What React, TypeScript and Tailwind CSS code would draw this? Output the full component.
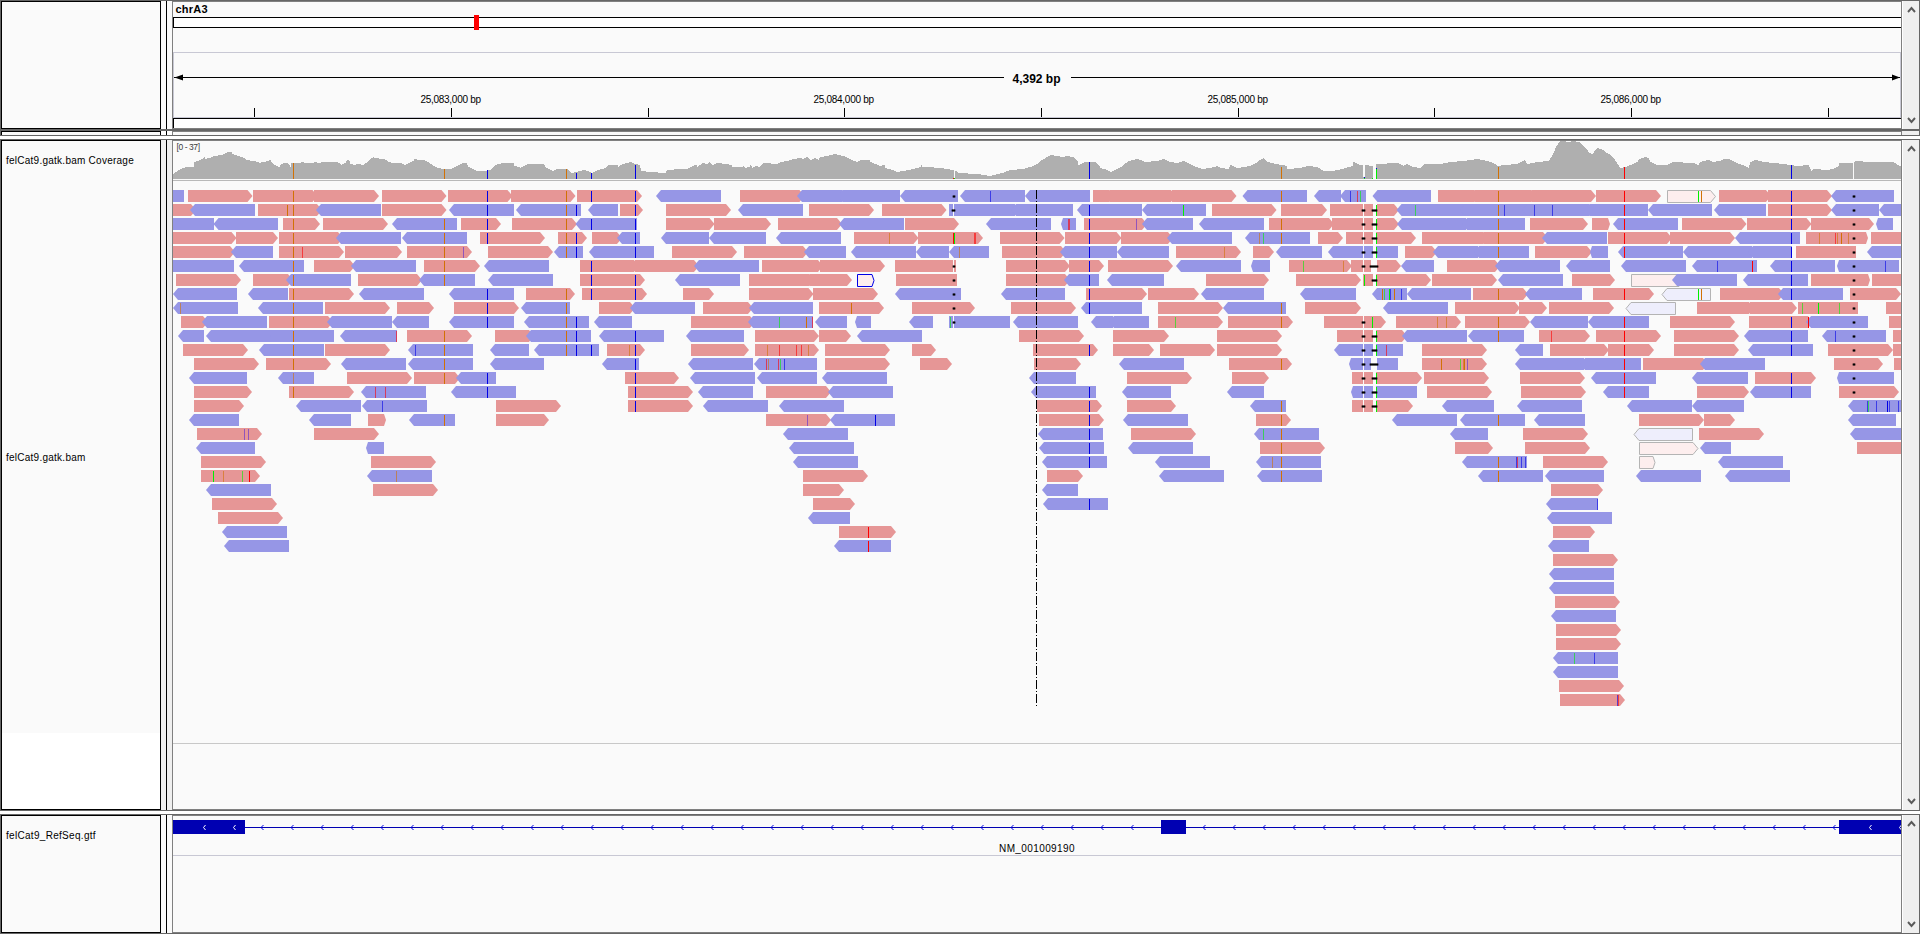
import React from "react";

// Each row lists reads as <kind><start>-<end>.
// F / R: forward / reverse read with an arrow head; f / r: flat segment;
// G / H: low mapping quality forward / reverse; B: blue outlined forward.
// A trailing "s" gives a short arrow head.
const READS: string[] = [
  "r173-184 F188-252.5 F253-317.5 F314-379 F382-446.5 F448-512.5 F511-575.5 F577-642 R656-721 F740-804.5 R797-842 R837.5-900 R900-958 R960-1025 R1025-1090 F1093-1114.5 F1110-1176 F1172-1236.5 R1242.5-1307 R1314-1341 R1340-1366 R1372.5-1431 F1438-1479.5 F1475-1536.5 F1532-1596 F1596-1661 G1667-1715.5 F1719-1771 F1768-1832 R1831-1894",
  "F173-196 R190-255 F258-322 R316-381 F382-446.5 R449-514 R516-581 R588-618 F620-643 F666-731 R738-803 F809-874 F882-946.5 r949-953 r954-1015 R1011-1073 R1077-1142 R1142-1206 F1212-1276.5 F1281-1327 f1330-1363 f1364-1373 F1377-1399 R1396.5-1466 R1460-1528 R1522-1589 R1584.5-1648 R1648-1712 R1714-1766 F1768-1832 R1831-1879 R1879-1910",
  "r173-214 R213.5-278 F283-320 F323-388 R392-457 F461-501 F512-577 R575.5-637 F666-714.5 F714-771 F778-842 R839-904 F905-959 R986-1051 R1061-1076 F1084-1147 R1142-1193 R1199-1264 F1269-1334 f1332-1363 f1364-1373 F1377-1399 R1397-1466 R1462-1525 F1530-1588 F1592-1610 R1613-1678 F1682-1746.5 F1747-1811.5 F1811-1874 R1876-1893",
  "F173-236.5 F236-278 F279-343 R336-401 R402-467 F480-545 F558-587 F592-622 R617-640 R661-709 R709-766 R776-841 F854-918.5 F918-983 F1000-1064.5 F1065-1121.5 F1121-1173 R1167-1232 R1245-1310 F1318-1343 f1346-1363 f1364-1373 F1376-1416 F1422-1488.5 F1484-1548 R1542-1607 F1608-1672 F1670-1735 R1735-1800 F1806-1868s f1871-1901",
  "F173-235 R231-273 F279-344 F345-402 F407-472 F488-553 R554-583 R589-654 F672-737 F744-808 R804-846 R851-916 R916-949 R949-989 F1002-1066 R1060-1117 R1117-1169 F1176-1241 F1253-1274 R1276-1322 R1328-1363 r1364-1373 r1376-1398 F1405-1437 R1433-1478 R1474-1529 F1535-1592 R1590-1608 R1618-1683 R1683-1752 R1748-1792 f1796-1856 R1867-1910",
  "r173-234 R239-304 F314-355 R351-416 F424-480 R484-549 F580-639 F635-699 R694-759 F762-823 F820-885 f895-953 f954-956 F1006-1070 F1069-1104 F1108-1173 R1176-1241 R1251-1270 F1289-1352 f1351-1363 f1364-1371 F1377-1401 R1401-1434 F1447-1500 R1495-1560 R1566-1610 R1621-1686 R1692-1757 R1770-1835 R1837-1899s",
  "F176-241 F253-293 R286-351 F358-422 R419-475 R488-553 F580-645 R675-740 F749-814.5 F810-852 B857-874 f896-957 F1006-1070 R1064-1099 R1107-1164 F1206-1269 F1296-1361 f1363-1373 F1376-1431 F1432-1497 R1498-1563 F1572-1615 G1631-1684 R1672-1737 R1743-1808 F1811-1870s f1872-1901",
  "R173-237 R248-288 F289-354 R359-424 R449-514 F526-575 F582-647 F683-714 F749-813.5 F813-878 R895-961 R1001-1065 F1086-1147 F1148-1199 R1201-1264 R1300-1356 R1372-1407 R1407-1471 F1473-1528 R1525-1582 F1593-1654 H1662-1711 F1720-1784 R1778-1843 F1850-1901",
  "R173-238 R258-323 F325-390 F397-434 F454-519 R521-570 F599-635 R630-695 F703-753 R749-813 F819-884 F912-975 F1011-1076 R1081-1142 F1158-1223 R1223-1286 F1305-1361 R1383-1448 F1455-1520 F1519-1547 F1549-1614 H1626-1676 F1697-1754 F1750-1797 f1798-1858 f1886-1901",
  "F181-208 R202-267 F269-333 R327-392 R392-429 R449-514 R524-589 R594-632 F691-755 R748-813 R815-847 R855-871 R909-933 r949-953 r954-1010 R1013-1078 R1091-1113 R1109-1149 F1158-1223 F1228-1293 f1324-1363 F1364-1386 F1396-1461 F1465-1530 R1530-1588 R1588-1649 F1670-1735 F1749-1813 R1806-1868 f1889-1901",
  "R178-204 R206-275 R270-334 R340-397 F407-472 F495-534 R526-591 R599-664 R686-744 F755-819 F819-851 R857-922 F1019-1084 F1113-1169 F1217-1282 f1337-1363 f1364-1373 F1376-1407 R1402-1467 R1468-1524 F1539-1590 F1596-1661 F1674-1739 R1744-1808 R1822-1886 f1893-1901",
  "F183-248 R259-324 F325-390 R408-473 R490-529 R534-599 F607-645 F691-749 F755-819 F825-890 F912-936 F1033-1098 F1113-1154 F1160-1215 F1217-1282 R1334-1363 r1364-1373 r1376-1403 F1422-1487 R1515-1543 F1550-1609 F1608-1654 F1674-1739 R1748-1813 F1828-1893 f1893-1901",
  "F194-259 F266-331 R341-406 R408-473 R490-544 R602-639 R688-753 R754-817 F825-890 F920-952 F1034-1081 R1119-1184 F1229-1292 R1349-1363s r1364-1371 r1377-1398 F1422-1487 R1515-1584 R1580-1641 F1643-1708 R1700-1765 F1834-1883 f1894-1901",
  "R189-247 R278-314 F347-412 F414-460 R456-496 F625-679 R690-755 R757-817 R822-887 R1029-1076 F1127-1192 F1232-1269 f1352-1363 f1364-1373 F1376-1422 F1424-1489 F1520-1585 R1591-1656 R1692-1748 F1755-1816 R1837-1894s",
  "F194-252 F289-354 R361-426 R451-516 F628-693 R698-753 F766-831 R828-893 R1031-1096 R1122-1171 R1227-1264 R1351-1363s r1364-1373 r1376-1417 F1427-1492 F1521-1586 R1603-1649 F1697-1749 R1750-1811 F1839-1899",
  "F194-244 R296-361 R362-427 F496-561 F628-693 R703-768 R779-844 F1037-1102 F1127-1176 R1250-1286 f1352-1363 f1364-1373 F1376-1413 R1442-1494 R1517-1582 R1627-1692 R1692-1744 R1848-1910",
  "R189-239 R309-351 F368-386 R409-455 F496-549 F766-831 R830-895 F1039-1104 R1123-1188 F1256-1291 R1392-1457 R1460-1525 R1534-1585 F1639-1704 F1704-1735 R1848-1896",
  "F197-262 F314-379 R783-848 R1038-1103 F1131-1196 R1254-1319 R1450-1488 F1523-1588 H1634-1693 F1699-1764 R1850-1910",
  "R196-255 R366-384 R789-854 R1039-1104 R1128-1193 F1260-1325 F1455-1493 F1525-1590 G1639-1698 R1700-1731 f1857-1901",
  "F201-266 F371-436 R793-858 R1042-1107 R1155-1210 R1256-1321 R1462-1527 F1543-1608 G1639-1655 R1718-1783",
  "F201-260 R367-432 F803-868 F1047-1083 R1159-1224 R1257-1322 R1478-1543 R1545-1604 R1636-1701 R1725-1790",
  "R206-271 F373-438 F803-844 R1042-1078 F1551-1603",
  "F212-277 F813-855 R1043-1108 R1546-1598",
  "F218-283 R808-850 R1547-1612",
  "R222-287 F839-896 F1553-1595",
  "R224-289 R834-891 R1548-1589",
  "F1553-1618",
  "R1549-1614",
  "R1549-1614",
  "F1555-1620",
  "R1551-1616",
  "F1556-1621",
  "F1556-1621",
  "R1553-1618",
  "R1553-1618",
  "F1559-1624",
  "F1560-1625",
];

// Variants shared by many reads: colour + position, then the rows that carry them.
const COLUMNS: [string, number[]][] = [
  ["O293", [0, 1, 2, 3, 4, 5, 6, 7, 8, 9, 10, 11, 12, 14]],
  ["O444", [2, 3, 4, 5, 6, 10, 11, 12, 13, 16]],
  ["B487", [0, 1, 2, 3, 7, 8, 9, 13, 14]],
  ["O566", [0, 1, 2, 3, 4, 7, 8, 9, 10, 11]],
  ["B576", [1, 3, 4, 9, 10, 11]],
  ["B591", [0, 2, 5, 6, 7, 11]],
  ["B635", [0, 1, 2, 3, 4, 6, 7, 10, 11, 12, 13, 14, 15]],
  ["B1089", [1, 2, 3, 4, 5, 6, 7, 8, 11, 14, 15, 16, 17, 18, 19, 22]],
  ["O1281", [0, 2, 3, 8, 9, 12, 15, 16, 17, 18, 19, 20]],
  ["G1376", [1, 2, 3, 4, 6, 10, 11, 13, 14, 15]],
  ["O1498", [0, 1, 2, 3, 4, 7, 9, 10, 16, 19, 20]],
  ["R1624", [0, 1, 2, 3, 4, 7, 9, 10, 11, 12, 13, 14]],
  ["B1791", [0, 1, 2, 3, 4, 5, 6, 7, 9, 10, 11, 13, 14]],
];

// Isolated mismatches per row; lower case means low base quality.
const MARKS: Record<number, string> = {
  0: "b990 b1350 r1357 g1360 G1698 O1701",
  1: "O287 G1183 g1415 b1504 b1534 b1552",
  2: "r1068 r1069 p1136",
  3: "o889 R953 G954 r974 r975 o1259 g1263 o1819 r1835 o1837 O1841 o1848",
  4: "r302 p463 o959 o1224",
  5: "g1303 o1343 b1717 R1752 b1885",
  6: "G1364",
  7: "O1382 g1384 G1389 b1390 O1394 b1401 G1698 O1701",
  8: "o180 O851 g1802 G1818 g1839",
  9: "g779 O806 r812 g950 g1175 G1372 o1437 o1446 R1808",
  10: "r396 r1551 b1835",
  11: "b415 o629 o767 r779 r796 r801 o808 r1386",
  12: "r766 o768 r778 g780 b784 O1441 g1460 o1463 O1464 p1467",
  13: "o293",
  14: "r375 r385",
  15: "b382 b1867 g1868 b1876 B1887 b1889 b1898",
  16: "p807 B875",
  17: "p244 p248 g1263",
  19: "o1272 b1516 r1517 b1521 b1525",
  20: "G213 o223 g242 R249 o396",
  22: "b1597",
  24: "R868",
  25: "R868",
  33: "g1574 b1594",
  36: "b1617 r1618",
};

// Deletions: start, end, rows.
const DELETIONS: [number, number, number[]][] = [
  [952, 956, [0, 5, 6, 7, 8, 9]],
  [951, 956, [1]],
  [1361, 1366, [1, 2, 3, 4, 5, 9, 10, 11, 12, 13, 14, 15]],
  [1371, 1378, [1, 2, 3, 4, 6, 10, 11, 13, 14, 15]],
  [1369, 1379, [5, 12]],
  [1852, 1856, [0, 1, 2, 3, 4, 5, 6, 7, 8, 9, 10, 11, 12, 13, 14]],
];

const COVERAGE =
  "173:5 177:8 179:9 182:11 187:12 193:12 194:17 198:18 202:20 204:22 205:20 212:22 214:23 222:24 223:25 228:27 231:27 232:25 235:24 238:23 241:22 245:20 246:19 253:18 257:17 259:16 263:17 268:18 270:19 271:17 274:14 279:12 280:14 283:16 287:16 289:14 290:12 291:16 303:16.6 305:16 313:16 315:17 317:16 324:17 337:17 341:14 345:16 347:19 349:18 350:15 354:14 358:15 363:14 367:17 370:20 373:22 374:21 383:20 386:19 388:17 392:16 400:16 405:14 409:16 413:18 414:20 418:19 423:19 428:17 433:13 438:11 442:10 450:10 455:12 459:14 463:16 466:16 468:12 473:10 476:8 483:8 490:9 493:12 497:15 505:16 513:16 514:13 518:12 520:11 524:13 527:15 543:15 545:12 548:10 552:8 557:10 567:10 571:6 580:8 583:9 588:8 591:6 594:7 598:9 605:11 608:14 617:14 618:12 622:15 627:16 630:17 635:15 639:14 641:8 650:7 665:6 667:9 680:10 687:10 692:13 696:14 697:12 702:16 707:15 709:17 712:14 717:16 725:15 731:14 732:12 742:12 743:13 745:11 749:12 750:14 752:11 755:13 759:12 763:16 777:15 780:17 787:18 793:20 800:21 803:20 807:22 810:19 815:21 818:19 820:22 827:23 835:25 838:24 843:23 848:21 853:18 857:17 860:19 869:19 870:17 875:15 880:13 884:14 885:11 892:9 896:7 903:8 913:10 920:12 921:14 922:12 927:12 940:11 952:9 956:8 958:6 977:5 990:3 1002:6 1010:9 1023:10 1033:13 1037:15 1040:18 1045:21 1050:24 1063:22 1066:23 1073:22 1077:18 1078:14 1085:17 1095:17 1098:14 1100:11 1107:9 1110:7 1115:9 1122:13 1128:18 1137:20 1145:17 1157:18 1163:20 1170:17 1177:16 1183:18 1188:16 1193:13 1202:10 1210:11 1217:13 1220:11 1228:10 1230:14 1237:11 1250:13 1256:16 1258:18 1263:21 1267:17 1275:15 1282:14 1286:13 1287:10 1300:11 1307:13 1317:12 1323:8 1332:8 1342:10 1352:13 1353:17 1360:14 1365:14 1372:13 1377:15 1397:16 1403:13 1407:15 1412:12 1420:11 1424:15 1440:15 1450:17 1463:18 1477:20 1487:18 1493:16 1497:13 1505:14 1517:15 1524:19 1527:15 1537:17 1548:18 1551:22 1553:26 1556:33 1559:37 1561:38 1570:37 1572:38 1579:37 1582:34 1586:30 1589:26 1592:25 1595:29 1597:31 1603:29 1605:27 1610:24 1613:21 1617:15 1620:11 1625:12 1630:14 1637:17 1639:20 1645:22 1648:21 1650:17 1657:14 1667:14 1672:17 1693:16 1698:14 1700:17 1708:19 1712:17 1720:18 1723:20 1728:20 1733:18 1738:15 1743:14 1748:11 1750:17 1755:19 1763:17 1773:16 1783:15 1790:14 1797:13 1808:14 1811:8 1813:10 1827:9 1833:10 1838:13 1839:16 1852:16 1855:18 1870:17 1880:17 1893:17 1897:14 1901:12";

const COVERAGE_BARS: [number, number, string][] = [
  [293, 16, "O"], [444, 10, "O"], [487, 9, "B"], [566, 10, "O"], [576, 6, "B"],
  [591, 6, "B"], [635, 14, "B"], [953, 1, "R"], [954, 1, "G"], [1089, 17, "B"],
  [1281, 12, "O"], [1364, 2, "B"], [1364, 1, "G"], [1372, 1, "G"], [1376, 11, "B"],
  [1376, 10, "G"], [1498, 12, "O"], [1624, 12, "R"], [1791, 14, "B"],
];

const BASE: Record<string, string> = {
  O: "#d17105",
  B: "#0000e6",
  R: "#ff0000",
  G: "#00f000",
  P: "#5a28d2",
};

const rowY = (row: number) => 190 + row * 14;

function coveragePath() {
  const pts = COVERAGE.split(" ").map((p) => p.split(":").map(Number));
  let d = "M173 179";
  let i = 0;
  for (let x = 173; x < 1901; x++) {
    while (i < pts.length - 2 && pts[i + 1][0] <= x) i++;
    const [x0, h0] = pts[i];
    const [x1, h1] = pts[i + 1];
    const h = Math.round(h0 + ((h1 - h0) * (x - x0)) / (x1 - x0));
    d += `V${179 - h}H${x + 1}`;
  }
  return d + "V179Z";
}

function Read({ spec, y }: { spec: string; y: number }) {
  const kind = spec[0];
  const short = spec.endsWith("s");
  const [a, b] = spec.slice(1).replace("s", "").split("-").map(Number);
  const forward = "FfGB".includes(kind);
  const outlined = "GHB".includes(kind);
  const flat = kind === "f" || kind === "r";
  const head = flat ? 0 : short || b - a <= 20 ? 2 : 5;
  const o = outlined ? 0.5 : 0;
  const t = y + o;
  const m = y + 6 + o;
  const e = y + 12 + o;
  const points = forward
    ? `${a + o},${t} ${b - head},${t} ${b},${m} ${b - head},${e} ${a + o},${e}`
    : `${b - o},${t} ${a + head},${t} ${a},${m} ${a + head},${e} ${b - o},${e}`;
  if (outlined) {
    return (
      <polygon
        points={points}
        fill={forward ? "#fdeeee" : "#eeeefc"}
        stroke={kind === "B" ? "#0000e6" : "#b4b4b4"}
      />
    );
  }
  return <polygon points={points} fill={forward ? "#e69696" : "#9696e6"} />;
}

function Mark({ spec, y }: { spec: string; y: number }) {
  const code = spec[0];
  const weak = code === code.toLowerCase();
  return (
    <rect
      x={Number(spec.slice(1))}
      y={y + 1}
      width={1}
      height={11}
      fill={BASE[code.toUpperCase()]}
      opacity={weak ? 0.6 : 1}
    />
  );
}

function AlignmentTrack() {
  return (
    <svg className="block" width="1728" height="669" viewBox="173 141 1728 669">
      <path d={coveragePath()} fill="#afafaf" shapeRendering="crispEdges" />
      <rect x="954" y="168" width="1" height="10" fill="#fafafa" />
      <rect x="1363" y="160" width="2" height="17" fill="#fafafa" />
      <rect x="1373" y="160" width="3" height="19" fill="#fafafa" />
      <rect x="1853" y="160" width="1" height="19" fill="#fafafa" />
      {COVERAGE_BARS.map(([x, h, c], i) => (
        <rect key={i} x={x} y={179 - h} width="1" height={h} fill={BASE[c]} />
      ))}
      <rect x="173" y="180" width="1728" height="1" fill="#b9b9b9" />
      <text x="176.5" y="150" fontSize="8.5" fill="#3c3c3c" textLength="23.5">
        [0 - 37]
      </text>
      {READS.map((line, row) => (
        <g key={row}>
          {line.split(" ").map((s, i) => (
            <Read key={i} spec={s} y={rowY(row)} />
          ))}
          {(MARKS[row] ?? "")
            .split(" ")
            .filter(Boolean)
            .map((s, i) => (
              <Mark key={i} spec={s} y={rowY(row)} />
            ))}
        </g>
      ))}
      {COLUMNS.map(([spec, rows]) =>
        rows.map((row) => <Mark key={spec + row} spec={spec} y={rowY(row)} />),
      )}
      {DELETIONS.map(([a, b, rows]) =>
        rows.map((row) => (
          <g key={`${a}-${row}`}>
            <rect x={a} y={rowY(row) + 5.5} width={b - a} height="2" fill="#000" opacity="0.35" />
            <rect x={a + 1} y={rowY(row) + 5.5} width={b - a - 2} height="2" fill="#000" />
          </g>
        )),
      )}
      <path d="M1036.5 190V708" stroke="#000" strokeDasharray="9 2 1 2" />
      <rect x="173" y="743" width="1728" height="1" fill="#c8c8c8" />
    </svg>
  );
}

const TICKS = [254, 451, 648, 844, 1041, 1238, 1434, 1631, 1828];
const TICK_LABELS: [number, string][] = [
  [451, "25,083,000 bp"],
  [844, "25,084,000 bp"],
  [1238, "25,085,000 bp"],
  [1631, "25,086,000 bp"],
];

function RulerTrack() {
  return (
    <svg className="block" width="1728" height="126" viewBox="173 2 1728 126">
      <text x="175.5" y="13" fontSize="11" fontWeight="700" textLength="32">
        chrA3
      </text>
      <rect x="173.5" y="17.5" width="1729" height="10" fill="#fff" stroke="#000" />
      <rect x="474" y="15" width="5" height="15" fill="#f00" />
      <rect x="173.5" y="52.5" width="1727" height="65" fill="none" stroke="#c8c8d4" />
      <path d="M174 77.5H1004M1071 77.5H1900" stroke="#000" />
      <path d="M174.5 77.5L183 74.5V80.5ZM1900 77.5L1892 74.5V80.5Z" />
      <text x="1012.5" y="83" fontSize="12" fontWeight="700" textLength="48">
        4,392 bp
      </text>
      {TICKS.map((x) => (
        <rect key={x} x={x} y="108" width="1" height="9" />
      ))}
      {TICK_LABELS.map(([x, label]) => (
        <text key={x} x={x - 30.5} y="103" fontSize="10" textLength="60.5">
          {label}
        </text>
      ))}
      <rect x="173" y="118" width="1728" height="10" />
      <rect x="174" y="119" width="1727" height="9" fill="#fff" />
    </svg>
  );
}

function GeneTrack() {
  const chevrons: number[] = [];
  for (let x = 261; x < 1150; x += 30) chevrons.push(x);
  for (let x = 1203; x < 1838; x += 30) chevrons.push(x);
  return (
    <svg className="block" width="1728" height="117" viewBox="173 816 1728 117">
      <rect x="173" y="827" width="1728" height="1" fill="#0000b2" />
      {chevrons.map((x) => (
        <path key={x} d={`M${x + 2.5} 825L${x} 827.5L${x + 2.5} 830`} fill="none" stroke="#0000e6" />
      ))}
      <rect x="173" y="820" width="72" height="14" fill="#0000b2" />
      <rect x="1161" y="820" width="25" height="14" fill="#0000b2" />
      <rect x="1839" y="820" width="62" height="14" fill="#0000b2" />
      {[203, 233, 1869, 1899].map((x) => (
        <path key={x} d={`M${x + 2.5} 825L${x + 0.5} 827.5L${x + 2.5} 830`} fill="none" stroke="#fff" />
      ))}
      <text x="999" y="852" fontSize="10" textLength="75.5">
        NM_001009190
      </text>
      <rect x="173" y="855" width="1728" height="1" fill="#c8c8d4" />
    </svg>
  );
}

function ScrollBar() {
  return (
    <div className="flex w-[17px] shrink-0 flex-col items-center justify-between border-l border-white bg-[#efefef] py-[5px]">
      <svg width="9" height="8" viewBox="0 0 9 8">
        <path d="M1 6L4.5 2L8 6" fill="none" stroke="#5a5a5a" strokeWidth="1.9" />
      </svg>
      <svg width="9" height="8" viewBox="0 0 9 8">
        <path d="M1 2L4.5 6L8 2" fill="none" stroke="#5a5a5a" strokeWidth="1.9" />
      </svg>
    </div>
  );
}

function Panel({
  height,
  frame,
  gutter,
  names,
  children,
}: {
  height: string;
  frame: string;
  gutter: string;
  names?: React.ReactNode;
  children: React.ReactNode;
}) {
  return (
    <section className={`flex w-full shrink-0 border-x border-[#666] ${height} ${frame}`}>
      <div className="w-[160px] shrink-0 overflow-hidden border border-black bg-[#fafafa]">{names}</div>
      <div className={`w-[5px] shrink-0 ${gutter}`} />
      <div className="w-px shrink-0 bg-black" />
      <div className={`w-[5px] shrink-0 ${gutter}`} />
      <div className="w-[1730px] shrink-0 overflow-hidden border border-[#808080] bg-[#fafafa]">{children}</div>
      <ScrollBar />
    </section>
  );
}

export default function App() {
  return (
    <main className="flex h-[934px] w-[1920px] flex-col overflow-hidden bg-white font-['Liberation_Sans',Arial,sans-serif] text-[10px] leading-[12px] text-black">
      <Panel height="h-[131px]" frame="border-t border-b-2" gutter="bg-[#fafafa]">
        <RulerTrack />
      </Panel>

      <section className="flex h-[5px] w-full shrink-0 border-x border-b border-[#666]">
        <div className="w-[160px] shrink-0 border-x border-t border-black bg-[#fafafa]" />
        <div className="w-[5px] shrink-0" />
        <div className="w-px shrink-0 bg-black" />
        <div className="w-[5px] shrink-0" />
        <div className="w-[1730px] shrink-0 border-x border-t border-[#808080] bg-[#fafafa]" />
        <div className="grow bg-[#efefef]" />
      </section>

      <div className="h-[3px] shrink-0" />

      <Panel
        height="h-[672px]"
        frame="border-y"
        gutter="bg-[#efefef]"
        names={
          <div className="flex h-full flex-col pt-[14px] tracking-[0.25px]">
            <p className="h-[297px] whitespace-nowrap pl-1">felCat9.gatk.bam Coverage</p>
            <p className="h-[281px] whitespace-nowrap pl-1">felCat9.gatk.bam</p>
            <div className="grow bg-white" />
          </div>
        }
      >
        <AlignmentTrack />
      </Panel>

      <div className="h-[3px] shrink-0" />

      <Panel
        height="h-[120px]"
        frame="border-y"
        gutter="bg-[#fafafa]"
        names={<p className="whitespace-nowrap pt-[14px] pl-1 tracking-[0.3px]">felCat9_RefSeq.gtf</p>}
      >
        <GeneTrack />
      </Panel>
    </main>
  );
}
